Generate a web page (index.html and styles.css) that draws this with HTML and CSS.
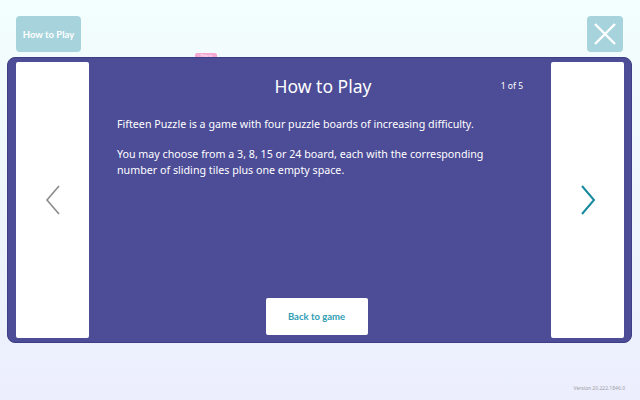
FILE: index.html
```html
<!DOCTYPE html>
<html lang="en">
  <head>
    <meta charset="UTF-8" />
    <meta name="viewport" content="width=device-width, initial-scale=1.0" />
    <title>Fifteen Puzzle - How to Play</title>
    <link rel="stylesheet" href="styles.css">
  </head>
  <body>
    <div class="top-bar">
      <button class="help-btn">How to Play</button>
      <span class="new-badge">This is</span>
      <button class="close-btn" aria-label="Close">
        <svg width="24" height="24" viewBox="0 0 24 24">
          <path d="M2 2 L22 22 M22 2 L2 22" stroke="#fff" stroke-width="2.4" fill="none" />
        </svg>
      </button>
    </div>

    <div class="dialog">
      <div class="nav-card">
        <svg width="16" height="30" viewBox="0 0 16 30">
          <path d="M14 1 L2 15 L14 29" stroke="#8a8a8a" stroke-width="1.6" fill="none" />
        </svg>
      </div>

      <div class="dialog-body">
        <div class="dialog-head">
          <h1 class="dialog-title">How to Play</h1>
          <span class="page-count">1 of 5</span>
        </div>
        <div class="dialog-text">
          <p>Fifteen Puzzle is a game with four puzzle boards of increasing difficulty.</p>
          <p>You may choose from a 3, 8, 15 or 24 board, each with the corresponding number of sliding tiles plus one empty space.</p>
        </div>
        <button class="back-btn">Back to game</button>
      </div>

      <div class="nav-card">
        <svg width="16" height="30" viewBox="0 0 16 30">
          <path d="M2 1 L14 15 L2 29" stroke="#16899c" stroke-width="2" fill="none" />
        </svg>
      </div>
    </div>

    <div class="version">Version 20.222.1846.0</div>
  </body>
</html>
```

FILE: styles.css
```css
* {
  margin: 0;
  padding: 0;
  box-sizing: border-box;
}

body {
  font-family: "Noto Sans", "Open Sans", sans-serif;
  background: linear-gradient(180deg, #f3fefe 0%, #eef6fb 50%, #eceefd 100%);
  height: 400px;
  overflow: hidden;
  display: flex;
  flex-direction: column;
}

.top-bar {
  position: relative;
  display: flex;
  justify-content: space-between;
  padding: 16px 17px 0 16px;
  height: 52px;
}

.help-btn,
.close-btn {
  background: #a7d4dc;
  border: none;
  border-radius: 4px;
  color: #fff;
  height: 36px;
}

.help-btn {
  width: 65px;
  font-family: Lato, sans-serif;
  font-weight: 700;
  font-size: 9.5px;
}

.close-btn {
  width: 36px;
  display: flex;
  align-items: center;
  justify-content: center;
}

/* little pink tag that peeks out from behind the dialog */
.new-badge {
  position: absolute;
  left: 195px;
  top: 53px;
  width: 22px;
  height: 8px;
  border-radius: 2px;
  background: #f6aad3;
  color: #fff;
  font-size: 4px;
  text-align: center;
  line-height: 6px;
}

.dialog {
  position: relative;
  z-index: 1;
  margin: 5px 8px 0 7px;
  height: 286px;
  background: #4c4c97;
  border: 1px solid #3e3e84;
  border-radius: 8px;
  padding: 4px 7px 4px 8px;
  display: flex;
}

.nav-card {
  width: 73px;
  background: #fff;
  border-radius: 2px;
  display: flex;
  align-items: center;
  justify-content: center;
}

.dialog-body {
  flex: 1;
  display: flex;
  flex-direction: column;
  align-items: center;
  color: #fff;
  padding: 10px 28px 3px;
}

.dialog-head {
  position: relative;
  width: 100%;
  text-align: center;
}

.dialog-title {
  font-weight: 400;
  font-size: 17.5px;
  line-height: 28px;
  padding-left: 6px;
}

.page-count {
  position: absolute;
  right: 0;
  top: 8px;
  font-size: 8.5px;
}

.dialog-text {
  align-self: flex-start;
  margin-top: 16px;
  width: 380px;
  font-size: 10.7px;
  line-height: 16px;
  flex: 1;
}

.dialog-text p + p {
  margin-top: 14px;
}

.back-btn {
  width: 102px;
  height: 37px;
  background: #fff;
  border: none;
  border-radius: 2px;
  color: #2f9db3;
  font-family: Lato, sans-serif;
  font-weight: 700;
  font-size: 9.5px;
  margin-right: 7px;
}

.version {
  margin-top: auto;
  padding: 0 15px 9px 0;
  text-align: right;
  font-size: 5px;
  color: #a0a0a8;
}
```
